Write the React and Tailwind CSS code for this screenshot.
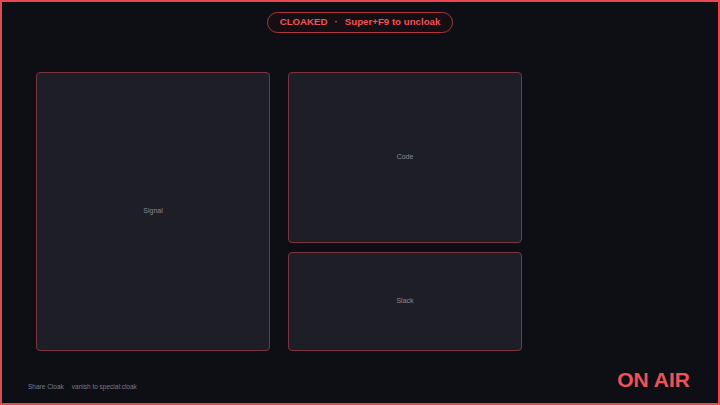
import React from 'react';

// 패널 하나 *************
const Pane = ({ label, className = '' }) => (
  <div className={`flex items-center justify-center rounded-[4px] border border-[#7d3442] bg-[#1e1e26] ${className}`}>
    <span className="text-[7px] text-[#8a8a93]">{label}</span>
  </div>
);

export default function App() {
  return (
    <div
      className="flex h-[405px] w-[720px] flex-col border-2 border-[#e8474f] bg-[#0e0f14]"
      style={{ fontFamily: '"Liberation Sans", Arial, sans-serif' }}
    >
      {/* 상단 알림 pill */}
      <div className="flex justify-center pt-[10px]">
        <div className="flex h-[21px] items-center gap-[7px] rounded-full border border-[#b0353f] bg-[#150f14] px-[12px] text-[9.7px] font-bold text-[#f0525a]">
          <span>CLOAKED</span>
          <span>·</span>
          <span>Super+F9 to uncloak</span>
        </div>
      </div>

      {/* 창 그리드 */}
      <div className="ml-[34px] mt-[39px] grid h-[279px] w-[486px] grid-cols-[234px_234px] grid-rows-[171px_99px] gap-x-[18px] gap-y-[9px]">
        <Pane label="Signal" className="row-span-2" />
        <Pane label="Code" />
        <Pane label="Slack" />
      </div>

      {/* 하단 바 */}
      <div className="mt-[18px] flex items-end justify-between pl-[26px] pr-[28px]">
        <div className="mb-[-2px] flex gap-[8px] text-[6.5px] text-[#7c7c84]">
          <span>Share Cloak</span>
          <span>vanish to special:cloak</span>
        </div>
        <span className="text-[21px] font-bold leading-none text-[#f0525a]">ON AIR</span>
      </div>
    </div>
  );
}
